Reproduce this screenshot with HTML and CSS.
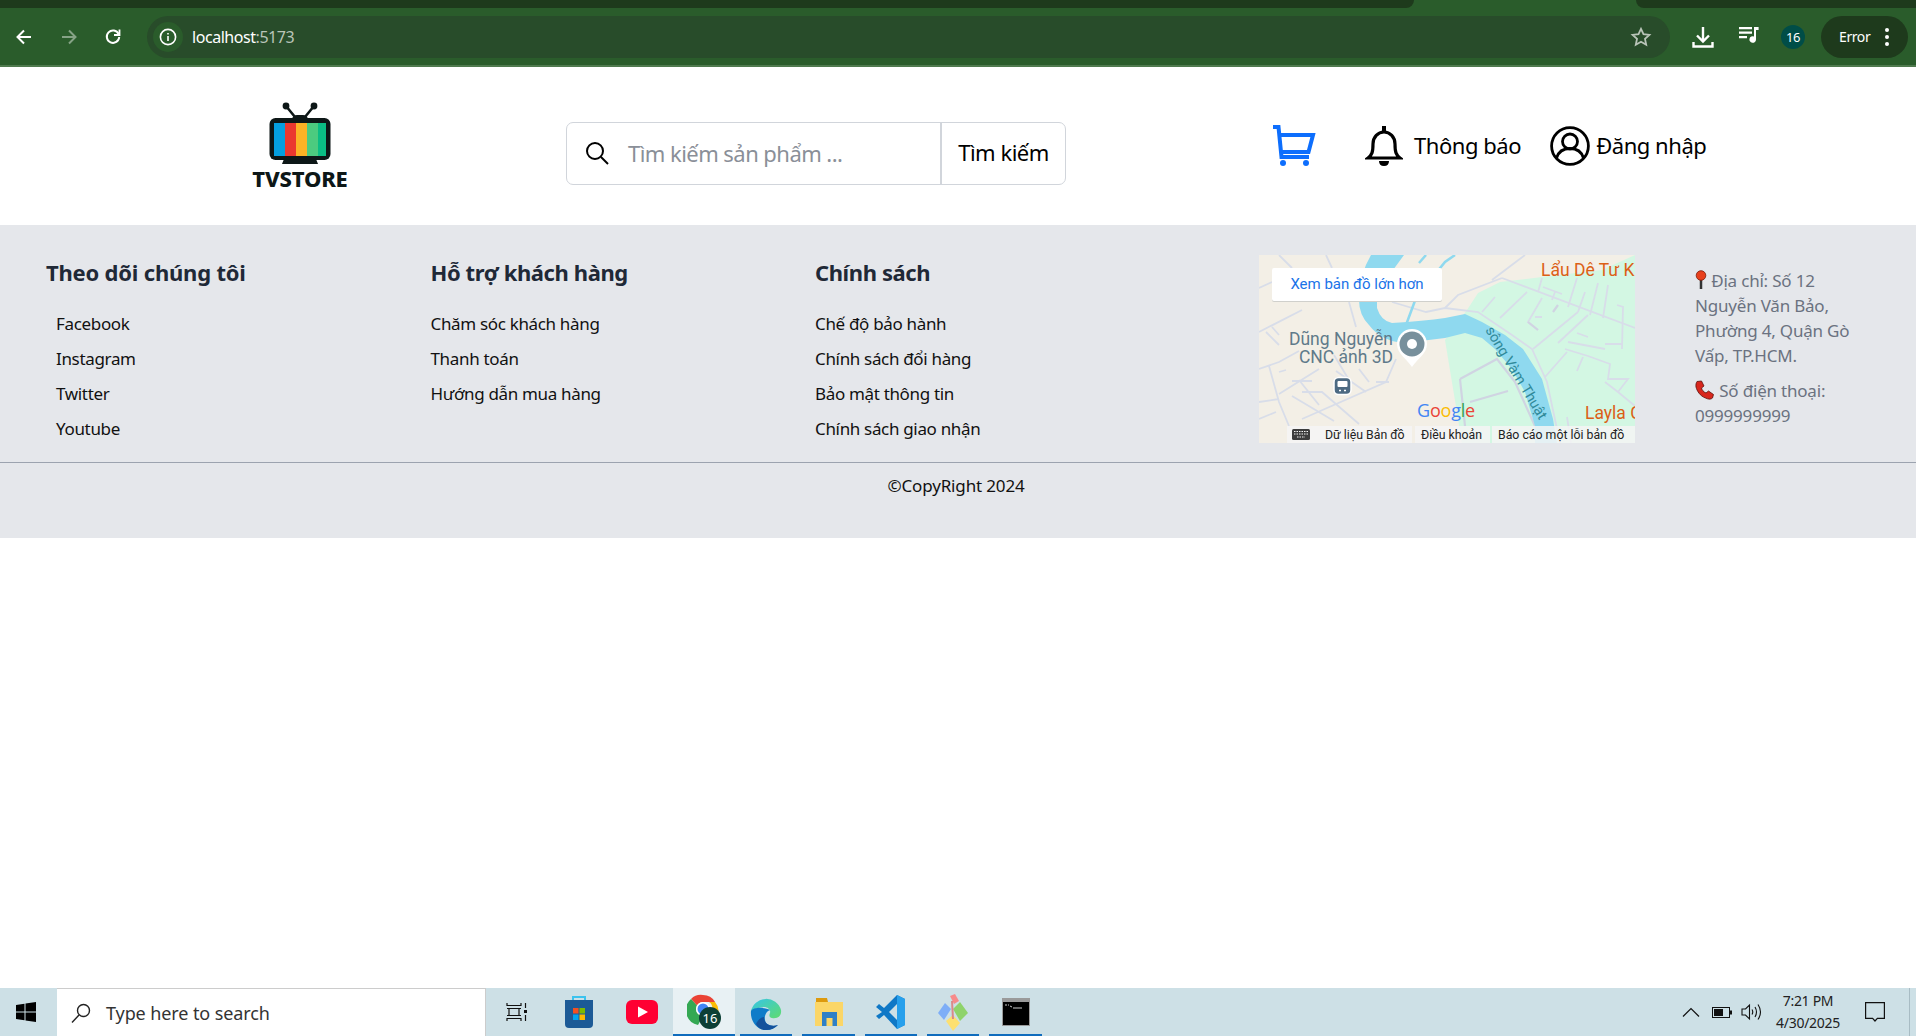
FILE: index.html
```html
<!DOCTYPE html>
<html lang="vi">
<head>
    <meta charset="UTF-8">
    <title>TVSTORE</title>
    <link rel="stylesheet" href="styles.css">
</head>
<body>

    <!-- Browser chrome -->
    <div class="browser-frame">
        <div class="tabstrip">
            <div class="strip-left"></div>
            <div class="strip-right"></div>
        </div>
        <div class="toolbar">
            <div class="tool-btn">
                <svg width="18" height="18" viewBox="0 0 18 18" fill="none" stroke="#fff" stroke-width="2"><path d="M16 9H3M9 2.5 2.5 9 9 15.5"/></svg>
            </div>
            <div class="tool-btn">
                <svg width="18" height="18" viewBox="0 0 18 18" fill="none" stroke="#86a386" stroke-width="2"><path d="M2 9h13M9 2.5 15.5 9 9 15.5"/></svg>
            </div>
            <div class="tool-btn">
                <svg width="18" height="18" viewBox="0 0 18 18" fill="none" stroke="#fff" stroke-width="2"><path d="M14.6 6A6.2 6.2 0 1 0 15.2 9"/><path d="M15.5 1.5V7h-5.5" stroke-width="1.8"/></svg>
            </div>
            <div class="omnibox">
                <div class="site-chip">
                    <svg width="20" height="20" viewBox="0 0 20 20" fill="none" stroke="#fff" stroke-width="1.6"><circle cx="10" cy="10" r="7.6"/><path d="M10 9v5M10 6v1.6"/></svg>
                </div>
                <span class="url">localhost<span class="url-port">:5173</span></span>
                <svg class="star" width="22" height="22" viewBox="0 0 22 22" fill="none" stroke="#b9c4b8" stroke-width="1.8"><path d="M11 2.8l2.5 5.4 5.9.7-4.4 4 1.2 5.8-5.2-2.9-5.2 2.9 1.2-5.8-4.4-4 5.9-.7z"/></svg>
            </div>
            <div class="tool-right">
                <svg class="dl-icon" width="24" height="24" viewBox="0 0 24 24" fill="none" stroke="#fff" stroke-width="2.4"><path d="M12 2v14M6 10.5l6 6 6-6M2.5 17v4.5h19V17"/></svg>
                <svg class="media-icon" width="20" height="18" viewBox="0 0 20 18" fill="#fff"><path d="M0 1h13v2.2H0zM0 5.5h13v2.2H0zM0 10h8v2.2H0z"/><path d="M15 1h4.6v3H17v9.5a3.3 3.3 0 1 1-2-3z"/></svg>
                <div class="count-badge">16</div>
                <div class="error-pill">
                    <span>Error</span>
                    <svg width="4" height="18" viewBox="0 0 4 18" fill="#fff"><circle cx="2" cy="2" r="2"/><circle cx="2" cy="9" r="2"/><circle cx="2" cy="16" r="2"/></svg>
                </div>
            </div>
        </div>
    </div>

    <!-- Site header -->
    <header class="site-header">
        <div class="logo">
            <svg width="64" height="64" viewBox="0 0 64 64">
                <path d="M18 4 27 15M46 4 37 15" stroke="#0d1717" stroke-width="2.600" fill="none"/>
                <circle cx="18" cy="4" r="3.400" fill="#0d1717"/>
                <circle cx="46" cy="4" r="3.400" fill="#0d1717"/>
                <path d="M24 17q1-4 5-4h6q4 0 5 4z" fill="#0d1717"/>
                <rect x="1.500" y="16" width="61" height="42" rx="6" fill="#0d1717"/>
                <path d="M16 57h32l2 5H14z" fill="#0d1717"/>
                <rect x="6" y="21" width="11" height="33" fill="#049fe0"/>
                <rect x="17" y="21" width="11" height="33" fill="#eb382f"/>
                <rect x="28" y="21" width="11" height="33" fill="#fcb325"/>
                <rect x="39" y="21" width="11" height="33" fill="#4ccb7f"/>
                <rect x="50" y="21" width="8" height="33" fill="#0abd84"/>
            </svg>
            <div class="logo-name">TVSTORE</div>
        </div>

        <div class="search-box">
            <div class="search-field">
                <svg width="26" height="26" viewBox="0 0 26 26" fill="none" stroke="#000" stroke-width="2"><circle cx="11" cy="11" r="8"/><path d="M17 17l7 7"/></svg>
                <span class="search-placeholder">Tìm kiếm sản phẩm ...</span>
            </div>
            <div class="search-btn">Tìm kiếm</div>
        </div>

        <svg class="cart-icon" width="44" height="42" viewBox="0 0 44 42" fill="none" stroke="#0d6efd" stroke-width="4">
            <path d="M1 2h5.500l3 30h27.500M8 10h33l-4.500 17H9.500"/>
            <circle cx="11" cy="38" r="3" fill="#0d6efd" stroke="none"/>
            <circle cx="34" cy="38" r="3" fill="#0d6efd" stroke="none"/>
        </svg>

        <div class="head-link notify-link">
            <svg width="38" height="42" viewBox="0 0 38 42" fill="none" stroke="#000" stroke-width="3.200">
                <path d="M3 33c4-3 5-6 5-14 0-7 5-12 11-12s11 5 11 12c0 8 1 11 5 14z"/>
                <path d="M19 1v6" stroke-width="4"/>
                <path d="M14 36h10q0 5-5 5t-5-5z" fill="#000" stroke="none"/>
            </svg>
            <span>Thông báo</span>
        </div>
        <div class="head-link login-link">
            <svg width="40" height="40" viewBox="0 0 40 40" fill="none" stroke="#000" stroke-width="2.800">
                <circle cx="20" cy="20" r="18.400"/>
                <circle cx="20" cy="15.500" r="7.500"/>
                <path d="M6.500 32c2-6.500 7-9.500 13.500-9.500S31.500 25.500 33.500 32"/>
            </svg>
            <span>Đăng nhập</span>
        </div>
    </header>

    <!-- Footer -->
    <footer class="site-footer">
        <div class="footer-cols">
            <div class="footer-col">
                <h3 class="title-wide">Theo dõi chúng tôi</h3>
                <ul class="link-list indented">
                    <li>Facebook</li>
                    <li>Instagram</li>
                    <li>Twitter</li>
                    <li>Youtube</li>
                </ul>
            </div>
            <div class="footer-col">
                <h3>Hỗ trợ khách hàng</h3>
                <ul class="link-list">
                    <li>Chăm sóc khách hàng</li>
                    <li>Thanh toán</li>
                    <li>Hướng dẫn mua hàng</li>
                </ul>
            </div>
            <div class="footer-col">
                <h3>Chính sách</h3>
                <ul class="link-list">
                    <li>Chế độ bảo hành</li>
                    <li>Chính sách đổi hàng</li>
                    <li>Bảo mật thông tin</li>
                    <li>Chính sách giao nhận</li>
                </ul>
            </div>

            <svg class="map" width="376" height="188" viewBox="0 0 376 188">
                <rect width="376" height="188" fill="#f3efe6"/>
                <path d="M186 85 208 55 219 38 241 27 283 22 343 15 376 0V188H203z" fill="#d3f7e3"/>

                <!-- roads -->
                <g fill="none" stroke="#d8dde9" stroke-width="1.800">
                    <path d="M20 0 33 13M67 0 73 13M0 33 13 27M0 77 43 55M7 77 20 90M13 72 20 80M90 47 97 72"/>
                    <path d="M133 47 167 57 186 53 219 57 253 80 273 94 288 127 301 188"/>
                    <path d="M243 23 376 73M243 23 199 40 186 53M266 0 233 25M223 57 236 42M241 63 268 37"/>
                    <path d="M283 43 269 67 279 75M276 62 283 62M284 32 303 39M296 37 293 45M283 23 279 37"/>
                    <path d="M318 23 309 52M326 37 319 57M339 28 331 60M349 30 344 63M358 50 364 52 363 94"/>
                    <path d="M329 60 299 88M319 57 274 94M318 78 329 82M309 87 346 94M346 89 363 89"/>
                    <path d="M286 122 308 97M306 94 329 101M324 102 318 116M329 101 351 109 349 124 369 124 359 137M346 127 359 137 376 151M308 162 312 188"/>
                    <path d="M0 114 20 107 40 96M10 111 20 147 30 171M0 147 20 144M0 164 17 157M33 126 53 126M20 139 60 114M33 141 75 166M43 137 63 137 100 169"/>
                    <path d="M43 164 127 127 137 104M77 116 107 137M100 114 110 127M117 127 130 127M20 117 27 115M60 150 40 125M75 100 90 125"/>
                </g>
                <g fill="none" stroke="#d0d4e2" stroke-width="2.200">
                    <path d="M201 124 238 104 256 127 276 171 280 188M211 147 249 136M201 124 206 171M299 50 294 57M269 67 279 75"/>
                </g>

                <!-- river -->
                <path d="M112 0H145L118 37V53Q122 66 133 68 165 66 186 63L206 59 223 67 246 80 264 94 283 124 294 164 298 188H276V171L266 137 253 114 236 94 223 83 206 78 186 83 145 88Q122 86 110 70 100 60 100 45 100 20 112 0z" fill="#8fd9ef"/>
                <path d="M147 70 157 43 186 7 196 0M167 0 160 8" fill="none" stroke="#8fd9ef" stroke-width="2.500"/>

                <text class="map-label" x="134" y="90" text-anchor="end">Dũng Nguyễn</text>
                <text class="map-label" x="134" y="108" text-anchor="end">CNC ảnh 3D</text>
                <path d="M153 112c-5-8-15-13-15-23a15 15 0 0 1 30 0c0 10-10 15-15 23z" fill="#fff"/>
                <circle cx="153" cy="89" r="12.500" fill="#78909c"/>
                <circle cx="153" cy="89" r="5" fill="#fff"/>
                <rect x="75" y="122.500" width="17" height="17" rx="4.500" fill="#4d6a82" stroke="#fff" stroke-width="1.500"/>
                <rect x="78.500" y="126" width="10" height="6" rx="1" fill="#fff"/>
                <path d="M80 135.500h2M85 135.500h2" stroke="#fff" stroke-width="1.500"/>
                <text class="map-river" transform="translate(226 75) rotate(59)">sông Vàm Thuật</text>
                <text class="map-place" x="282" y="21">Lẩu Dê Tư K</text>
                <text class="map-place" x="326" y="164">Layla C</text>
                <text class="map-google" x="158" y="162"><tspan fill="#4285f4">G</tspan><tspan fill="#ea4335">o</tspan><tspan fill="#fbbc05">o</tspan><tspan fill="#4285f4">g</tspan><tspan fill="#34a853">l</tspan><tspan fill="#ea4335">e</tspan></text>

                <rect x="13" y="14" width="170" height="33" rx="2" fill="#d0d0cc"/>
                <rect x="13" y="13" width="170" height="33" rx="2" fill="#fff"/>
                <text class="map-btn-text" x="98" y="34" text-anchor="middle">Xem bản đồ lớn hơn</text>

                <rect x="28" y="171" width="125" height="17" fill="#f5f5f5" opacity="0.85"/>
                <rect x="156" y="171" width="75" height="17" fill="#f5f5f5" opacity="0.85"/>
                <rect x="233" y="171" width="143" height="17" fill="#f5f5f5" opacity="0.85"/>
                <rect x="33" y="174" width="18" height="11" rx="1.500" fill="#3c3c3c"/>
                <path d="M35 176.500h14M35 179h14M38 182h8" stroke="#f5f5f5" stroke-width="1" stroke-dasharray="1.500 1"/>
                <text class="map-attr" x="66" y="184">Dữ liệu Bản đồ</text>
                <text class="map-attr" x="162" y="184">Điều khoản</text>
                <text class="map-attr" x="239" y="184">Báo cáo một lỗi bản đồ</text>
            </svg>

            <div class="contact">
                <p>
                    <svg width="12" height="20" viewBox="0 0 12 20"><path d="M6 9v10" stroke="#333" stroke-width="2.500"/><circle cx="6" cy="5.500" r="4.800" fill="#e8401c" stroke="#7a1c0a" stroke-width="0.800"/></svg>
                    Địa chỉ: Số 12 Nguyễn Văn Bảo, Phường 4, Quận Gò Vấp, TP.HCM.
                </p>
                <p>
                    <svg width="20" height="20" viewBox="0 0 20 20"><path d="M2 1.500 6.500 1l2.500 5-2.500 2c.5 2 2 4 4.500 5l2.500-2 5 3.500-1 3.500c-1.500 1.500-4 1.500-7 0C5 16 2 11 1 7c-.3-2 0-4 1-5.500z" fill="#d8261c" stroke="#5a100a" stroke-width="0.800"/></svg>
                    Số điện thoại: 0999999999
                </p>
            </div>
        </div>
        <div class="copyright">©CopyRight 2024</div>
    </footer>

    <main class="page-blank"></main>

    <!-- Windows taskbar -->
    <div class="taskbar">
        <div class="start-btn">
            <svg width="20" height="20" viewBox="0 0 20 20" fill="#000"><path d="M0 3l8.500-1.300v7.800H0zM9.500 1.500 20 0v9.500H9.500zM0 10.500h8.500v7.800L0 17zM9.500 10.500H20V20L9.500 18.500z"/></svg>
        </div>
        <div class="task-search">
            <svg width="20" height="20" viewBox="0 0 20 20" fill="none" stroke="#222" stroke-width="1.400"><circle cx="12.500" cy="7.500" r="6"/><path d="M8 12 1 19.500"/></svg>
            <span>Type here to search</span>
        </div>
        <div class="task-tile">
            <svg width="22" height="20" viewBox="0 0 22 20" fill="none" stroke="#111" stroke-width="1.200"><path d="M1 1v2.500h14V1M3 6.500h10v7H3zM1 6.500h14M1 13.500h14M1 19v-2.500h14V19M19.500 1v5M19.500 13v6"/><rect x="18" y="8" width="3" height="3" fill="#111" stroke="none"/></svg>
        </div>
        <div class="task-tile">
            <svg width="30" height="34" viewBox="0 0 30 34"><path d="M9 6V2h12v4" fill="none" stroke="#3cc3ee" stroke-width="2"/><path d="M1 5h28v24q0 4-4 4H5q-4 0-4-4z" fill="#1c5a96"/><rect x="9" y="13" width="5.500" height="5.500" fill="#f25022"/><rect x="15.500" y="13" width="5.500" height="5.500" fill="#7fba00"/><rect x="9" y="19.500" width="5.500" height="5.500" fill="#00a4ef"/><rect x="15.500" y="19.500" width="5.500" height="5.500" fill="#ffb900"/></svg>
        </div>
        <div class="task-tile">
            <svg width="32" height="24" viewBox="0 0 32 24"><rect width="32" height="24" rx="6" fill="#ff0033"/><path d="M12 6.500 22 12 12 17.500z" fill="#fff"/></svg>
        </div>
        <div class="task-tile tile-active">
            <svg width="34" height="38" viewBox="0 0 34 38">
                <path d="M16 3a14 14 0 0 1 12.100 7H16a7 7 0 0 0-6 3.500L4 7A14 14 0 0 1 16 3z" fill="#ea4335"/>
                <path d="M4 7l6 6.500a7 7 0 0 0 6 10.500l-5 9A15 15 0 0 1 4 7z" fill="#34a853"/>
                <path d="M28 10a14 14 0 0 1-13 23l7-11a7 7 0 0 0 0-12z" fill="#fbbc05"/>
                <circle cx="16" cy="17" r="7" fill="#fff"/>
                <circle cx="16" cy="17" r="5.500" fill="#4285f4"/>
                <circle cx="23" cy="26" r="11" fill="#0c3f36"/>
                <text class="tile-count" x="23" y="31" text-anchor="middle">16</text>
            </svg>
        </div>
        <div class="task-tile">
            <svg width="32" height="38" viewBox="0 0 32 38">
                <defs>
                    <linearGradient id="edgeA" x1="0" y1="0" x2="1" y2="1"><stop offset="0" stop-color="#36c5e8"/><stop offset="1" stop-color="#5fdc6e"/></linearGradient>
                </defs>
                <path d="M1 18A15.500 15.500 0 0 1 31 17c1 7-5 9-9 8-3-.5-3-3-2-5 1-3-2-6-6-6-6 0-13 4-13 4z" fill="url(#edgeA)"/>
                <path d="M1 18c-1 9 5 19 15 19 5 0 9-2 12-5-5 2-12 1-13-5-1-5 2-9 5-10-5-3-17-3-19 1z" fill="#0f7cc9"/>
                <path d="M14 24c0 8 8 10 14 8-3 3-7 5-12 5-5 0-8-2-10-6 2-4 5-7 8-7z" fill="#14529c"/>
            </svg>
        </div>
        <div class="task-tile">
            <svg width="30" height="30" viewBox="0 0 30 30"><path d="M2 1h11l1 4h-12z" fill="#dd9a0d"/><rect x="1" y="5" width="28" height="24" fill="#fbd667"/><path d="M8 29V15h15v14h-4.500v-8h-6v8z" fill="#2f80c7"/></svg>
        </div>
        <div class="task-tile">
            <svg width="30" height="36" viewBox="0 0 30 36"><path d="M21 1 29 5v26l-8 4L8 21l-5 4-3-3 6-4-6-5 3-3 5 4z" fill="#0f78c6"/><path d="M21 1 29 5v26l-8 4z" fill="#27a0ec"/><path d="M21 10v16l-8-8z" fill="#cde0e6"/></svg>
        </div>
        <div class="task-tile">
            <svg width="32" height="38" viewBox="0 0 32 38">
                <path d="M13 3l5-2 4 7-5 3z" fill="#f78a8a"/>
                <path d="M8 10 1 20l6 7 7-11z" fill="#7eaef7"/>
                <path d="M23 9l8 11-8 8-7-12z" fill="#8fd36b"/>
                <path d="M9 28l7-6 7 8-7 8z" fill="#fde070"/>
                <path d="M15 8l1 18" stroke="#d98a8a" stroke-width="2"/>
            </svg>
        </div>
        <div class="task-tile">
            <svg width="28" height="28" viewBox="0 0 28 28"><rect width="28" height="28" fill="#9a9a9a"/><rect x="1" y="4" width="26" height="23" fill="#000"/><path d="M3 7h2M6 7h1M8 8l2 1M11 10h9" stroke="#ccc" stroke-width="1"/></svg>
        </div>
        <div class="tray">
            <svg width="18" height="10" viewBox="0 0 18 10" fill="none" stroke="#111" stroke-width="1.200"><path d="M1 9.500 9 1.500l8 8"/></svg>
            <svg class="battery" width="20" height="11" viewBox="0 0 20 11"><rect x="0.500" y="0.500" width="17" height="10" fill="none" stroke="#111"/><rect x="2" y="2" width="9" height="7" fill="#111"/><rect x="18" y="3.500" width="2" height="4" fill="#111"/></svg>
            <svg class="speaker" width="21" height="18" viewBox="0 0 21 18" fill="none" stroke="#111" stroke-width="1.100"><path d="M1 6h3.500L8.500 2v14l-4-4H1zM11 6.500q1.500 2.500 0 5M14 4q3 5 0 10M17 1.500q5 7.500 0 15"/></svg>
            <div class="clock">
                <div>7:21 PM</div>
                <div>4/30/2025</div>
            </div>
            <svg class="note" width="20" height="20" viewBox="0 0 20 20" fill="none" stroke="#111" stroke-width="1.200"><path d="M.6.600h18.800v15.800h-7L10 19l-2.400-2.600H.6z"/></svg>
        </div>
    </div>

</body>
</html>
```

FILE: styles.css
```css
/* Page */
html, body {
    height: 100%;
}
body {
    margin: 0;
    display: flex;
    flex-direction: column;
    height: 1036px;
    overflow: hidden;
    background-color: #fff;
    font-family: "Noto Sans", "Open Sans", sans-serif;
    color: #000;
}

/* Browser chrome */
.browser-frame {
    flex-shrink: 0;
    background-color: #1e3a1c;
}
.tabstrip {
    height: 8px;
    display: flex;
    justify-content: space-between;
    background-color: #2a5c2b;
}
.strip-left {
    width: 1414px;
    background-color: #1e3a1c;
    border-bottom-right-radius: 8px;
}
.strip-right {
    width: 280px;
    background-color: #1e3a1c;
    border-bottom-left-radius: 8px;
}
.toolbar {
    height: 57px;
    display: flex;
    align-items: center;
    padding-left: 2px;
    background-color: #2a5c2b;
    border-bottom: 2px solid #4f7a4e;
}
.tool-btn {
    width: 44.5px;
    display: flex;
    justify-content: center;
}
.omnibox {
    width: 1523px;
    height: 42px;
    margin-left: 11.500px;
    display: flex;
    align-items: center;
    border-radius: 21px;
    background-color: #284c2a;
}
.site-chip {
    width: 30px;
    height: 30px;
    margin-left: 6px;
    border-radius: 15px;
    display: flex;
    align-items: center;
    justify-content: center;
    background-color: #2a5c2b;
}
.url {
    margin-left: 9px;
    font-size: 16px;
    letter-spacing: -0.45px;
    color: #fff;
}
.url-port {
    color: #b9c4b8;
}
.star {
    margin-left: auto;
    margin-right: 18px;
}
.tool-right {
    display: flex;
    align-items: center;
    margin-left: 21px;
}
.media-icon {
    margin-left: 24px;
    margin-top: -4px;
}
.count-badge {
    width: 24px;
    height: 24px;
    margin-left: 22px;
    border-radius: 12px;
    text-align: center;
    line-height: 24px;
    font-size: 13px;
    letter-spacing: -0.5px;
    color: #fff;
    background-color: #004d47;
}
.error-pill {
    width: 87px;
    height: 42px;
    box-sizing: border-box;
    margin-left: 16px;
    padding: 0 19px 0 18px;
    border-radius: 21px;
    display: flex;
    align-items: center;
    justify-content: space-between;
    font-size: 14px;
    letter-spacing: -0.4px;
    color: #fff;
    background-color: #1e3a1c;
}

/* Site header */
.site-header {
    height: 158px;
    flex-shrink: 0;
    display: flex;
    align-items: flex-start;
}
.logo {
    width: 100px;
    margin: 35px 0 0 250px;
    text-align: center;
}
.logo svg {
    display: block;
    margin: 0 auto;
}
.logo-name {
    margin-top: 1px;
    font-size: 22px;
    line-height: 22px;
    font-weight: 800;
    letter-spacing: -0.2px;
    color: #0d1717;
}
.search-box {
    width: 500px;
    height: 63px;
    box-sizing: border-box;
    margin: 55px 0 0 216px;
    display: flex;
    border: 1px solid #d1d5db;
    border-radius: 7px;
}
.search-field {
    width: 375px;
    display: flex;
    align-items: center;
    padding: 0 0 2px 17px;
    box-sizing: border-box;
    border-right: 2px solid #d1d5db;
}
.search-placeholder {
    margin-left: 18px;
    font-size: 22px;
    letter-spacing: -0.55px;
    color: #8a8f98;
}
.search-btn {
    flex: 1;
    text-align: center;
    line-height: 58px;
    font-size: 22px;
    letter-spacing: -0.5px;
}
.cart-icon {
    margin: 58px 0 0 206px;
}
.head-link {
    display: flex;
    align-items: center;
    font-size: 22px;
    letter-spacing: -0.45px;
    margin-top: 58px;
    height: 42px;
}
.head-link span {
    position: relative;
    top: -1px;
}
.notify-link {
    margin-left: 49px;
}
.notify-link span {
    margin-left: 11px;
}
.login-link {
    margin-left: 29px;
}
.login-link span {
    margin-left: 6px;
}

/* Footer */
.site-footer {
    height: 313px;
    flex-shrink: 0;
    background-color: #e5e7eb;
}
.footer-cols {
    height: 238px;
    box-sizing: border-box;
    padding: 30px 0 0 46px;
    display: flex;
    align-items: flex-start;
    border-bottom: 1px solid #9ca3af;
}
.footer-col {
    width: 384.500px;
    flex-shrink: 0;
}
.footer-col:nth-child(3) {
    width: 444px;
}
.footer-col h3 {
    margin: -1px 0 0;
    font-size: 22px;
    line-height: 36px;
    letter-spacing: -0.4px;
    font-weight: 700;
    color: #1f2937;
}
.footer-col h3.title-wide {
    letter-spacing: -0.2px;
}
.link-list {
    list-style: none;
    margin: 16px 0 0;
    padding: 0;
}
.link-list.indented {
    padding-left: 10px;
}
.link-list li {
    height: 35px;
    line-height: 35px;
    font-size: 17px;
    letter-spacing: -0.33px;
    color: #111;
}
.map {
    flex-shrink: 0;
}
.map-label {
    font: 17.500px Roboto, sans-serif;
    fill: #5f7a8a;
}
.map-river {
    font: 14.500px Roboto, sans-serif;
    fill: #2f8a9a;
}
.map-place {
    font: 17.500px Roboto, sans-serif;
    fill: #dc5f16;
}
.map-google {
    font: 18px "Open Sans", sans-serif;
    letter-spacing: -0.2px;
}
.map-btn-text {
    font: 15px Roboto, sans-serif;
    fill: #1a73e8;
}
.map-attr {
    font: 12.300px Roboto, sans-serif;
    fill: #222;
}
.contact {
    width: 170px;
    margin: 13px 0 0 60px;
    font-size: 17px;
    line-height: 25px;
    letter-spacing: -0.2px;
    color: #6b7280;
}
.contact p {
    margin: 0 0 10px;
}
.contact svg {
    vertical-align: -3px;
}
.copyright {
    margin-top: 11px;
    padding-right: 4px;
    text-align: center;
    font-size: 17px;
    line-height: 24px;
    letter-spacing: -0.15px;
    color: #111;
}

.page-blank {
    flex: 1;
}

/* Windows taskbar */
.taskbar {
    height: 48px;
    flex-shrink: 0;
    display: flex;
    align-items: stretch;
    background-color: #cde0e6;
}
.start-btn {
    width: 57px;
    display: flex;
    align-items: center;
    justify-content: center;
    padding-right: 5px;
    box-sizing: border-box;
}
.task-search {
    width: 429px;
    box-sizing: border-box;
    display: flex;
    align-items: center;
    padding-left: 14px;
    border-top: 1px solid #ccc;
    border-right: 1px solid #ccc;
    background-color: #fff;
    font-size: 18px;
    letter-spacing: -0.1px;
    color: #333;
}
.task-search span {
    margin-left: 15px;
}
.task-tile {
    width: 62.300px;
    display: flex;
    align-items: center;
    justify-content: center;
    position: relative;
}
.task-tile:nth-child(n+7)::after {
    content: "";
    position: absolute;
    left: 5px;
    right: 5px;
    bottom: 0;
    height: 2px;
    background-color: #0f6cbd;
}
.tile-active {
    background-color: #e8f1f4;
    border-bottom: 2px solid #0f6cbd;
    box-sizing: border-box;
}
.tile-count {
    font: 13px "Noto Sans", sans-serif;
    fill: #fff;
}
.tray {
    margin-left: auto;
    width: 228px;
    display: flex;
    align-items: center;
    box-sizing: border-box;
    border-right: 1px solid #a8bcc4;
    margin-right: 6px;
}
.battery {
    margin-left: 12px;
}
.speaker {
    margin-left: 9px;
}
.clock {
    width: 80px;
    margin-left: 6px;
    text-align: center;
    font-size: 14px;
    line-height: 22px;
    letter-spacing: -0.3px;
    color: #222;
}
.note {
    margin-left: 17px;
}
```
